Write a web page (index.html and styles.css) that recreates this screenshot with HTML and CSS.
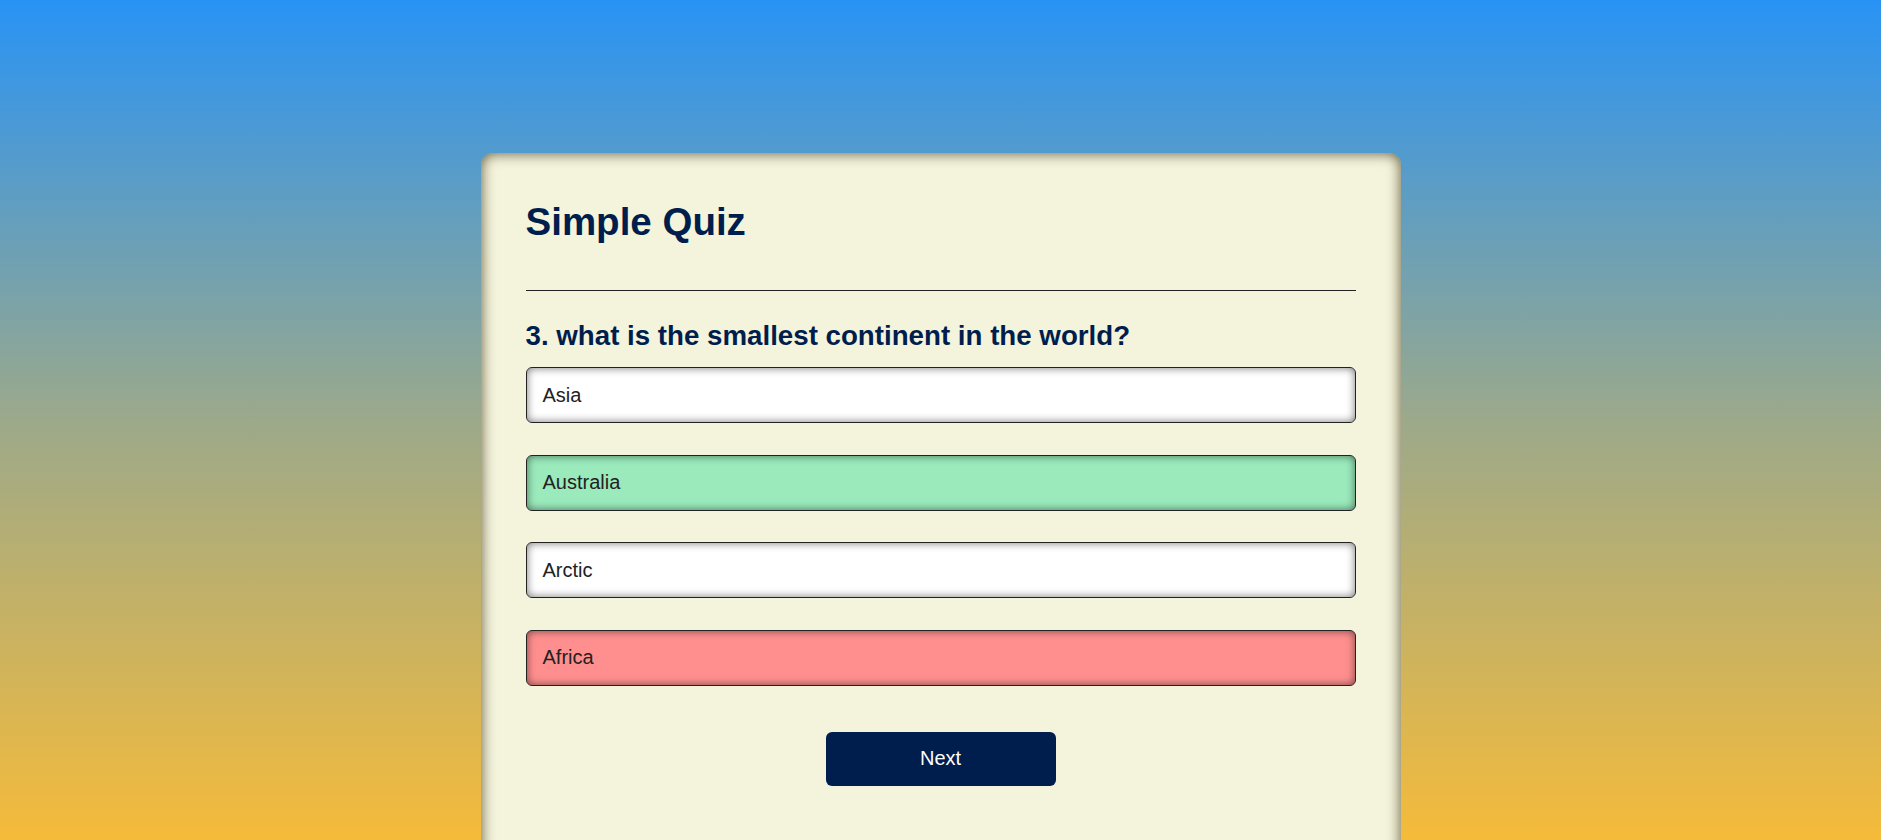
FILE: index.html
```html
<!DOCTYPE html>
<html>
<head>
<meta charset="utf-8">
<title>Simple Quiz</title>
<link rel="stylesheet" href="styles.css">
</head>
<body>
<div class="app">
  <h1 class="title">Simple Quiz</h1>
  <hr class="rule">
  <div class="quiz">
    <h2 class="question">3. what is the smallest continent in the world?</h2>
    <div class="answers">
      <button class="btn">Asia</button>
      <button class="btn correct">Australia</button>
      <button class="btn">Arctic</button>
      <button class="btn incorrect">Africa</button>
    </div>
    <button class="next">Next</button>
  </div>
</div>
</body>
</html>
```

FILE: styles.css
```css
* { box-sizing: border-box; }
html, body { margin: 0; padding: 0; }
body {
  height: 840px;
  overflow: hidden;
  background: linear-gradient(to bottom, #2893f5 0%, #9ca98a 50%, #f5bb3a 100%);
  font-family: "Liberation Sans", Arial, sans-serif;
}
.app {
  width: 920px;
  margin: 153px auto 0;
  padding: 47px 45px 45px;
  min-height: 800px;
  background: #f4f4dc;
  border-radius: 12px;
  box-shadow: inset 0 0 14px rgba(50, 40, 10, 0.8);
}
.title {
  margin: 0;
  font-size: 38.5px;
  color: #001e4d;
  font-weight: bold;
}
.rule {
  margin: 46px 0 0;
  border: 0;
  border-top: 1px solid #222;
}
.quiz { padding-top: 29px; }
.question {
  margin: 0;
  font-size: 27.7px;
  color: #001e4d;
  font-weight: bold;
}
.answers {
  display: flex;
  flex-direction: column;
  gap: 31.5px;
  margin-top: 15px;
}
.btn {
  display: block;
  width: 100%;
  height: 56px;
  padding: 0 16px;
  text-align: left;
  font-family: "Liberation Sans", Arial, sans-serif;
  font-size: 20px;
  color: #222;
  background: #fff;
  border: 1px solid #222;
  border-radius: 6px;
  box-shadow: inset 0 0 8px rgba(0, 0, 0, 0.55);
}
.btn.correct { background: #9aeabc; }
.btn.incorrect { background: #ff8f8f; }
.next {
  display: block;
  margin: 46px auto 0;
  width: 230px;
  height: 54px;
  background: #001e4d;
  color: #fff;
  border: 0;
  border-radius: 6px;
  font-family: "Liberation Sans", Arial, sans-serif;
  font-size: 20px;
}
```
